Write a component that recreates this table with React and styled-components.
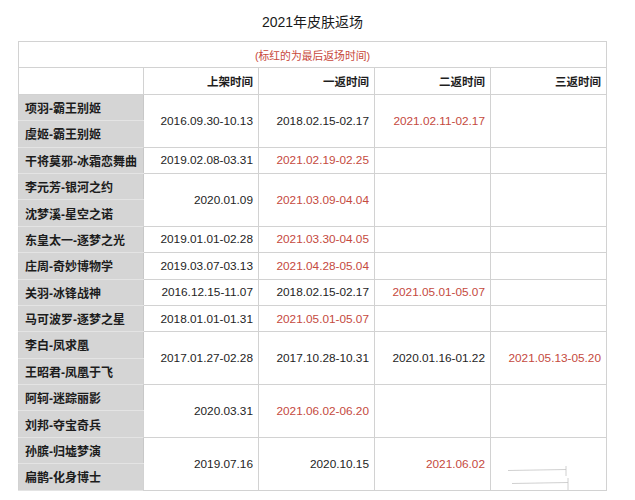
import React from "react";
import styled, { createGlobalStyle } from "styled-components";

const Global = createGlobalStyle`
  html, body { margin: 0; padding: 0; background: #fff; }
  body { font-family: "Liberation Sans", "Noto Sans CJK SC", sans-serif; color: #222; }
`;

const Page = styled.div`
  position: relative;
  width: 635px;
  height: 500px;
  overflow: hidden;
  background: #fff;
`;

const Title = styled.div`
  height: 41px;
  display: flex;
  align-items: center;
  justify-content: center;
  font-size: 14px;
  color: #1a1a1a;
  padding-right: 10px;
  box-sizing: border-box;
`;

const Table = styled.table`
  margin-left: 18px;
  width: 588px;
  border-collapse: collapse;
  table-layout: fixed;
  font-size: 11.8px;
`;

const Row = styled.tr`
  height: 26.4px;
`;

const Note = styled.td`
  border: 1px solid #d2d2d2;
  text-align: center;
  color: #c8483a;
  font-size: 10.8px;
  padding: 0;
`;

const Head = styled.th`
  border: 1px solid #d2d2d2;
  text-align: right;
  padding: 0 5px 0 0;
  font-weight: 600;
  font-size: 11.5px;
  color: #1e1e1e;
  background: #fff;
`;

const Name = styled.td`
  background: #d5d5d5;
  border-top: 1px solid #e4e4e4;
  border-bottom: 1px solid #e4e4e4;
  border-left: 1px solid #d2d2d2;
  border-right: 1px solid #c8c8c8;
  padding: 0 0 0 6px;
  font-size: 12px;
  font-weight: 600;
  color: #1c1c1c;
  white-space: nowrap;
`;

const Cell = styled.td`
  border: 1px solid #d2d2d2;
  text-align: right;
  padding: 0 5px 0 0;
  color: ${(p) => (p.$red ? "#c54a3e" : "#1e1e1e")};
  white-space: nowrap;
`;

const Scratch = styled.svg`
  position: absolute;
  left: 500px;
  top: 460px;
  width: 80px;
  height: 35px;
`;

const groups = [
  { names: ["项羽-霸王别姬", "虞姬-霸王别姬"], d: ["2016.09.30-10.13", "2018.02.15-02.17", "2021.02.11-02.17", ""], red: 2 },
  { names: ["干将莫邪-冰霜恋舞曲"], d: ["2019.02.08-03.31", "2021.02.19-02.25", "", ""], red: 1 },
  { names: ["李元芳-银河之约", "沈梦溪-星空之诺"], d: ["2020.01.09", "2021.03.09-04.04", "", ""], red: 1 },
  { names: ["东皇太一-逐梦之光"], d: ["2019.01.01-02.28", "2021.03.30-04.05", "", ""], red: 1 },
  { names: ["庄周-奇妙博物学"], d: ["2019.03.07-03.13", "2021.04.28-05.04", "", ""], red: 1 },
  { names: ["关羽-冰锋战神"], d: ["2016.12.15-11.07", "2018.02.15-02.17", "2021.05.01-05.07", ""], red: 2 },
  { names: ["马可波罗-逐梦之星"], d: ["2018.01.01-01.31", "2021.05.01-05.07", "", ""], red: 1 },
  { names: ["李白-凤求凰", "王昭君-凤凰于飞"], d: ["2017.01.27-02.28", "2017.10.28-10.31", "2020.01.16-01.22", "2021.05.13-05.20"], red: 3 },
  { names: ["阿轲-迷踪丽影", "刘邦-夺宝奇兵"], d: ["2020.03.31", "2021.06.02-06.20", "", ""], red: 1 },
  { names: ["孙膑-归墟梦演", "扁鹊-化身博士"], d: ["2019.07.16", "2020.10.15", "2021.06.02", ""], red: 2 },
];

export default function App() {
  const rows = [];
  groups.forEach((g, gi) => {
    g.names.forEach((n, ni) => {
      rows.push(
        <Row key={`${gi}-${ni}`}>
          <Name>{n}</Name>
          {ni === 0 &&
            g.d.map((v, i) => (
              <Cell key={i} rowSpan={g.names.length} $red={i === g.red}>
                {v}
              </Cell>
            ))}
        </Row>
      );
    });
  });
  return (
    <Page>
      <Global />
      <Title>2021年皮肤返场</Title>
      <Table>
        <colgroup>
          <col style={{ width: 125 }} />
          <col style={{ width: 115 }} />
          <col style={{ width: 116 }} />
          <col style={{ width: 116 }} />
          <col style={{ width: 116 }} />
        </colgroup>
        <tbody>
          <Row>
            <Note colSpan={5}>(标红的为最后返场时间)</Note>
          </Row>
          <Row>
            <Head />
            <Head>上架时间</Head>
            <Head>一返时间</Head>
            <Head>二返时间</Head>
            <Head>三返时间</Head>
          </Row>
          {rows}
        </tbody>
      </Table>
      <Scratch viewBox="0 0 80 35">
        <path d="M8 10.5 L66 9.5 M66 6 L66 16 M12 23.5 L68 22.5 M68 18 L68 30" stroke="#c4c4c4" strokeWidth="0.8" fill="none" />
      </Scratch>
    </Page>
  );
}
